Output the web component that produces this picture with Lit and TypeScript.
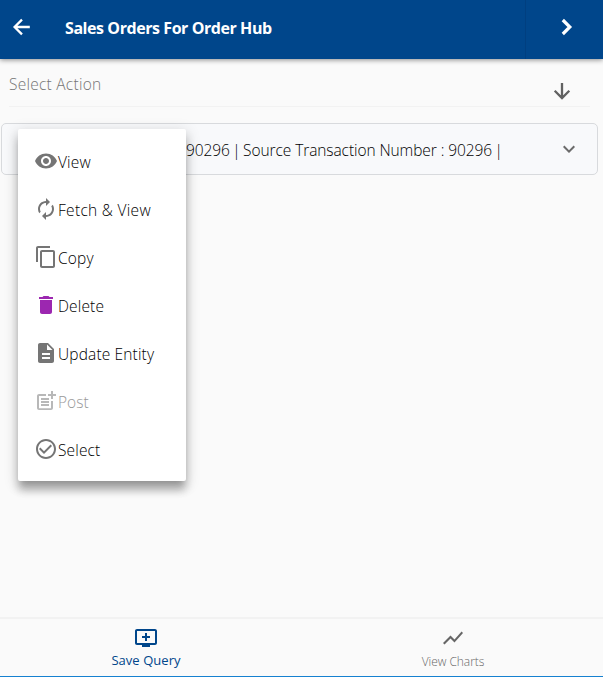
import { LitElement, html, css, svg } from "lit";
import { customElement } from "lit/decorators.js";

const icons = {
  view: svg`<path d="M12 4.5C7 4.5 2.73 7.61 1 12c1.73 4.39 6 7.5 11 7.5s9.27-3.11 11-7.5c-1.73-4.39-6-7.5-11-7.5zM12 17c-2.76 0-5-2.24-5-5s2.24-5 5-5 5 2.24 5 5-2.24 5-5 5zm0-8c-1.66 0-3 1.34-3 3s1.34 3 3 3 3-1.34 3-3-1.34-3-3-3z"/>`,
  fetch: svg`<path d="M12 6v3l4-4-4-4v3c-4.42 0-8 3.58-8 8 0 1.57.46 3.03 1.24 4.26L6.7 14.8c-.45-.83-.7-1.79-.7-2.8 0-3.31 2.69-6 6-6zm6.76 1.74L17.3 9.2c.44.84.7 1.79.7 2.8 0 3.31-2.69 6-6 6v-3l-4 4 4 4v-3c4.42 0 8-3.58 8-8 0-1.57-.46-3.03-1.24-4.26z"/>`,
  copy: svg`<path d="M16 1H4c-1.1 0-2 .9-2 2v14h2V3h12V1zm3 4H8c-1.1 0-2 .9-2 2v14c0 1.1.9 2 2 2h11c1.1 0 2-.9 2-2V7c0-1.1-.9-2-2-2zm0 16H8V7h11v14z"/>`,
  remove: svg`<path d="M6 19c0 1.1.9 2 2 2h8c1.1 0 2-.9 2-2V7H6v12zM19 4h-3.5l-1-1h-5l-1 1H5v2h14V4z"/>`,
  update: svg`<path d="M14 2H6c-1.1 0-1.99.9-1.99 2L4 20c0 1.1.89 2 1.99 2H18c1.1 0 2-.9 2-2V8l-6-6zm2 16H8v-2h8v2zm0-4H8v-2h8v2zm-3-5V3.5L18.5 9H13z"/>`,
  post: svg`<path d="M17 19.22H5V7h7V5H5c-1.1 0-2 .9-2 2v12c0 1.1.9 2 2 2h12c1.1 0 2-.9 2-2v-7h-2v7.22z"/><path d="M19 2h-2v3h-3c.01.01 0 2 0 2h3v2.99c.01.01 2 0 2 0V7h3V5h-3V2zM7 9h8v2H7zM7 12v2h8v-2h-3zM7 15h8v2H7z"/>`,
  select: svg`<path d="M16.59 7.58L10 14.17l-3.59-3.58L5 12l5 5 8-8zM12 2C6.48 2 2 6.48 2 12s4.48 10 10 10 10-4.48 10-10S17.52 2 12 2zm0 18c-4.42 0-8-3.58-8-8s3.58-8 8-8 8 3.58 8 8-3.58 8-8 8z"/>`,
  back: svg`<path d="M20.8 12H5.6M13 4.6L5.6 12l7.4 7.4" fill="none" stroke="currentColor" stroke-width="2.3"/>`,
  next: svg`<path d="M7.8 5l7 7-7 7" fill="none" stroke="currentColor" stroke-width="3.2"/>`,
  down: svg`<path d="M12 4v15M4.7 11.7L12 19l7.3-7.3" fill="none" stroke="currentColor" stroke-width="2.3"/>`,
  expand: svg`<path d="M16.59 8.59L12 13.17 7.41 8.59 6 10l6 6 6-6z"/>`,
  save: svg`<path d="M21 3H3c-1.11 0-2 .89-2 2v12c0 1.1.89 2 2 2h5v2h8v-2h5c1.1 0 1.99-.9 1.99-2L23 5c0-1.11-.9-2-2-2zm0 14H3V5h18v12zm-5-7v2h-3v3h-2v-3H8v-2h3V7h2v3h3z"/>`,
  chart: svg`<path d="M3.5 18.49l6-6.01 4 4L22 6.92l-1.41-1.41-7.09 7.97-4-4L2 16.99z"/>`,
};

type IconName = keyof typeof icons;
const icon = (name: IconName) =>
  html`<svg class="icon ${name}" viewBox="0 0 24 24">${icons[name]}</svg>`;

const actions: { icon: IconName; label: string; disabled?: boolean }[] = [
  { icon: "view", label: "View" },
  { icon: "fetch", label: "Fetch & View" },
  { icon: "copy", label: "Copy" },
  { icon: "remove", label: "Delete" },
  { icon: "update", label: "Update Entity" },
  { icon: "post", label: "Post", disabled: true },
  { icon: "select", label: "Select" },
];

@customElement("app-root")
export class AppRoot extends LitElement {
  static styles = css`
    :host {
      display: flex;
      flex-direction: column;
      position: relative;
      box-sizing: border-box;
      height: 100vh;
      overflow: hidden;
      background: #fafafa;
      border-bottom: 1px solid #1681d0;
      font-family: "Open Sans", "Noto Sans", sans-serif;
      font-size: 15.5px;
      font-weight: 350;
      color: #000;
      white-space: nowrap;
    }
    * { box-sizing: border-box; }
    .icon { width: 24px; height: 24px; flex: none; display: block; fill: currentColor; }
    header {
      height: 59px;
      flex: none;
      display: flex;
      align-items: center;
      padding: 0 0 5px 9px;
      background: #00468b;
      color: #fff;
      box-shadow: 0 1px 5px rgba(0, 0, 0, 0.45);
      z-index: 1;
    }
    .title {
      flex: 1;
      margin: 2px 0 0 32px;
      font-size: 16px;
      font-weight: 700;
      letter-spacing: -0.43px;
    }
    .forward {
      align-self: stretch;
      width: 78px;
      margin-bottom: -5px;
      padding: 15px 0 0 29px;
      border-left: 1px solid #003f80;
    }
    .action {
      height: 48px;
      flex: none;
      display: flex;
      justify-content: space-between;
      margin: 0 13px 0 9px;
      padding: 20px 16px 0 0;
      border-bottom: 1px solid #f2f2f2;
      color: #757575;
      line-height: 12px;
    }
    .action .label { margin-top: -1px; letter-spacing: 0.25px; }
    .action .icon { color: #616161; }
    .record {
      height: 52px;
      flex: none;
      display: flex;
      align-items: center;
      justify-content: space-between;
      margin: 16px 5px 0 1px;
      padding: 0 16px 0 184px;
      background: #f8f9fb;
      border: 1px solid #d8dadd;
      border-radius: 5px;
    }
    .record .icon { color: #6b6b6b; }
    .record .text { margin-top: 2px; letter-spacing: -0.08px; }
    .record .sep { margin: 0 -1.5px; }
    .menu {
      position: absolute;
      left: 18px;
      top: 129px;
      width: 168px;
      padding: 8px 0;
      background: #fff;
      border-radius: 2px;
      box-shadow: 0 5px 5px -3px rgba(0, 0, 0, 0.1), 0 8px 10px 1px rgba(0, 0, 0, 0.14),
        0 3px 14px 2px rgba(0, 0, 0, 0.12), 0 11px 8px -2px rgba(0, 0, 0, 0.16);
      z-index: 2;
    }
    .item { display: flex; align-items: center; height: 48px; padding: 0 16px; }
    .item .icon { color: #757575; }
    .item .remove { color: #9c27b0; }
    .item span { margin-top: 2px; letter-spacing: 0.15px; }
    .item:nth-child(2) span { letter-spacing: 0.3px; }
    .disabled .icon { color: #b8b8b8; }
    .disabled span { color: #999; letter-spacing: 0; }
    nav {
      margin-top: auto;
      height: 59px;
      flex: none;
      display: flex;
      border-top: 2px solid #f2f2f2;
    }
    .tab {
      width: 308px;
      flex: none;
      display: flex;
      flex-direction: column;
      align-items: center;
      padding-top: 7px;
      font-size: 12px;
      line-height: 18px;
      color: #666;
    }
    .tab span { margin-top: 3px; letter-spacing: -0.05px; }
    .tab.active { margin-left: -7px; width: 306px; font-size: 13px; color: #00468b; }
    .tab.active span { margin-top: 1px; font-weight: 400; letter-spacing: 0.05px; }
  `;

  render() {
    return html`
      <header>
        ${icon("back")}
        <div class="title">Sales Orders For Order Hub</div>
        <div class="forward">${icon("next")}</div>
      </header>
      <div class="action"><span class="label">Select Action</span>${icon("down")}</div>
      <div class="record">
        <span class="text">90296 <span class="sep">|</span> Source Transaction Number : 90296 <span class="sep">|</span></span>${icon("expand")}
      </div>
      <div class="menu">
        ${actions.map(
          (a) => html`<div class="item ${a.disabled ? "disabled" : ""}">${icon(a.icon)}<span>${a.label}</span></div>`
        )}
      </div>
      <nav>
        <div class="tab active">${icon("save")}<span>Save Query</span></div>
        <div class="tab">${icon("chart")}<span>View Charts</span></div>
      </nav>
    `;
  }
}
